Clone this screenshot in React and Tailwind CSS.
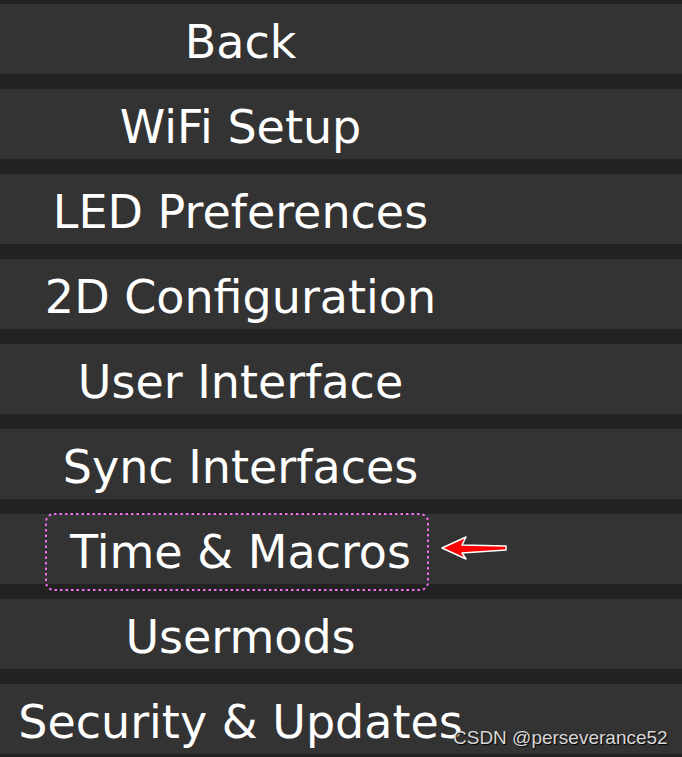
const items = [
  'Back',
  'WiFi Setup',
  'LED Preferences',
  '2D Configuration',
  'User Interface',
  'Sync Interfaces',
  'Time & Macros',
  'Usermods',
  'Security & Updates',
];

function Arrow() {
  return (
    <svg width="70" height="28" viewBox="0 0 70 28" className="absolute left-[439px] top-[20px]">
      <polygon
        points="3,14 27,3 23,11 67,12 67,16 23,19 27,25"
        fill="#ff0000"
        stroke="#ffffff"
        strokeWidth="1.5"
        strokeLinejoin="round"
      />
    </svg>
  );
}

// dotted highlight frame (square dots, like a screenshot annotation)
function Frame() {
  return (
    <svg width="384" height="78" className="absolute left-[45px] top-[-1px]">
      <rect
        x="1"
        y="1"
        width="382"
        height="76"
        rx="8"
        fill="none"
        stroke="#f070f0"
        strokeWidth="2"
        strokeDasharray="2.5 3"
      />
    </svg>
  );
}

export default function App() {
  return (
    <div
      className="w-[682px] h-[757px] bg-[#222222] overflow-hidden relative flex flex-col gap-[15px] pt-[4px]"
      style={{ fontFamily: '"DejaVu Sans", Verdana, sans-serif' }}
    >
      {items.map((label) => (
        <div key={label} className="relative h-[70px] shrink-0 bg-[#333333] flex items-center">
          <div className="w-[481px] text-center text-white text-[46px] leading-none pt-[5px]">
            {label}
          </div>
          {label === 'Time & Macros' && (
            <>
              <Frame />
              <Arrow />
            </>
          )}
        </div>
      ))}
      <div
        className="absolute left-[453px] top-[724px] text-[19px] text-[#d8d8d8] [text-shadow:1px_1px_1px_#000]"
        style={{ fontFamily: '"Liberation Sans", Arial, sans-serif' }}
      >
        CSDN @perseverance52
      </div>
    </div>
  );
}
